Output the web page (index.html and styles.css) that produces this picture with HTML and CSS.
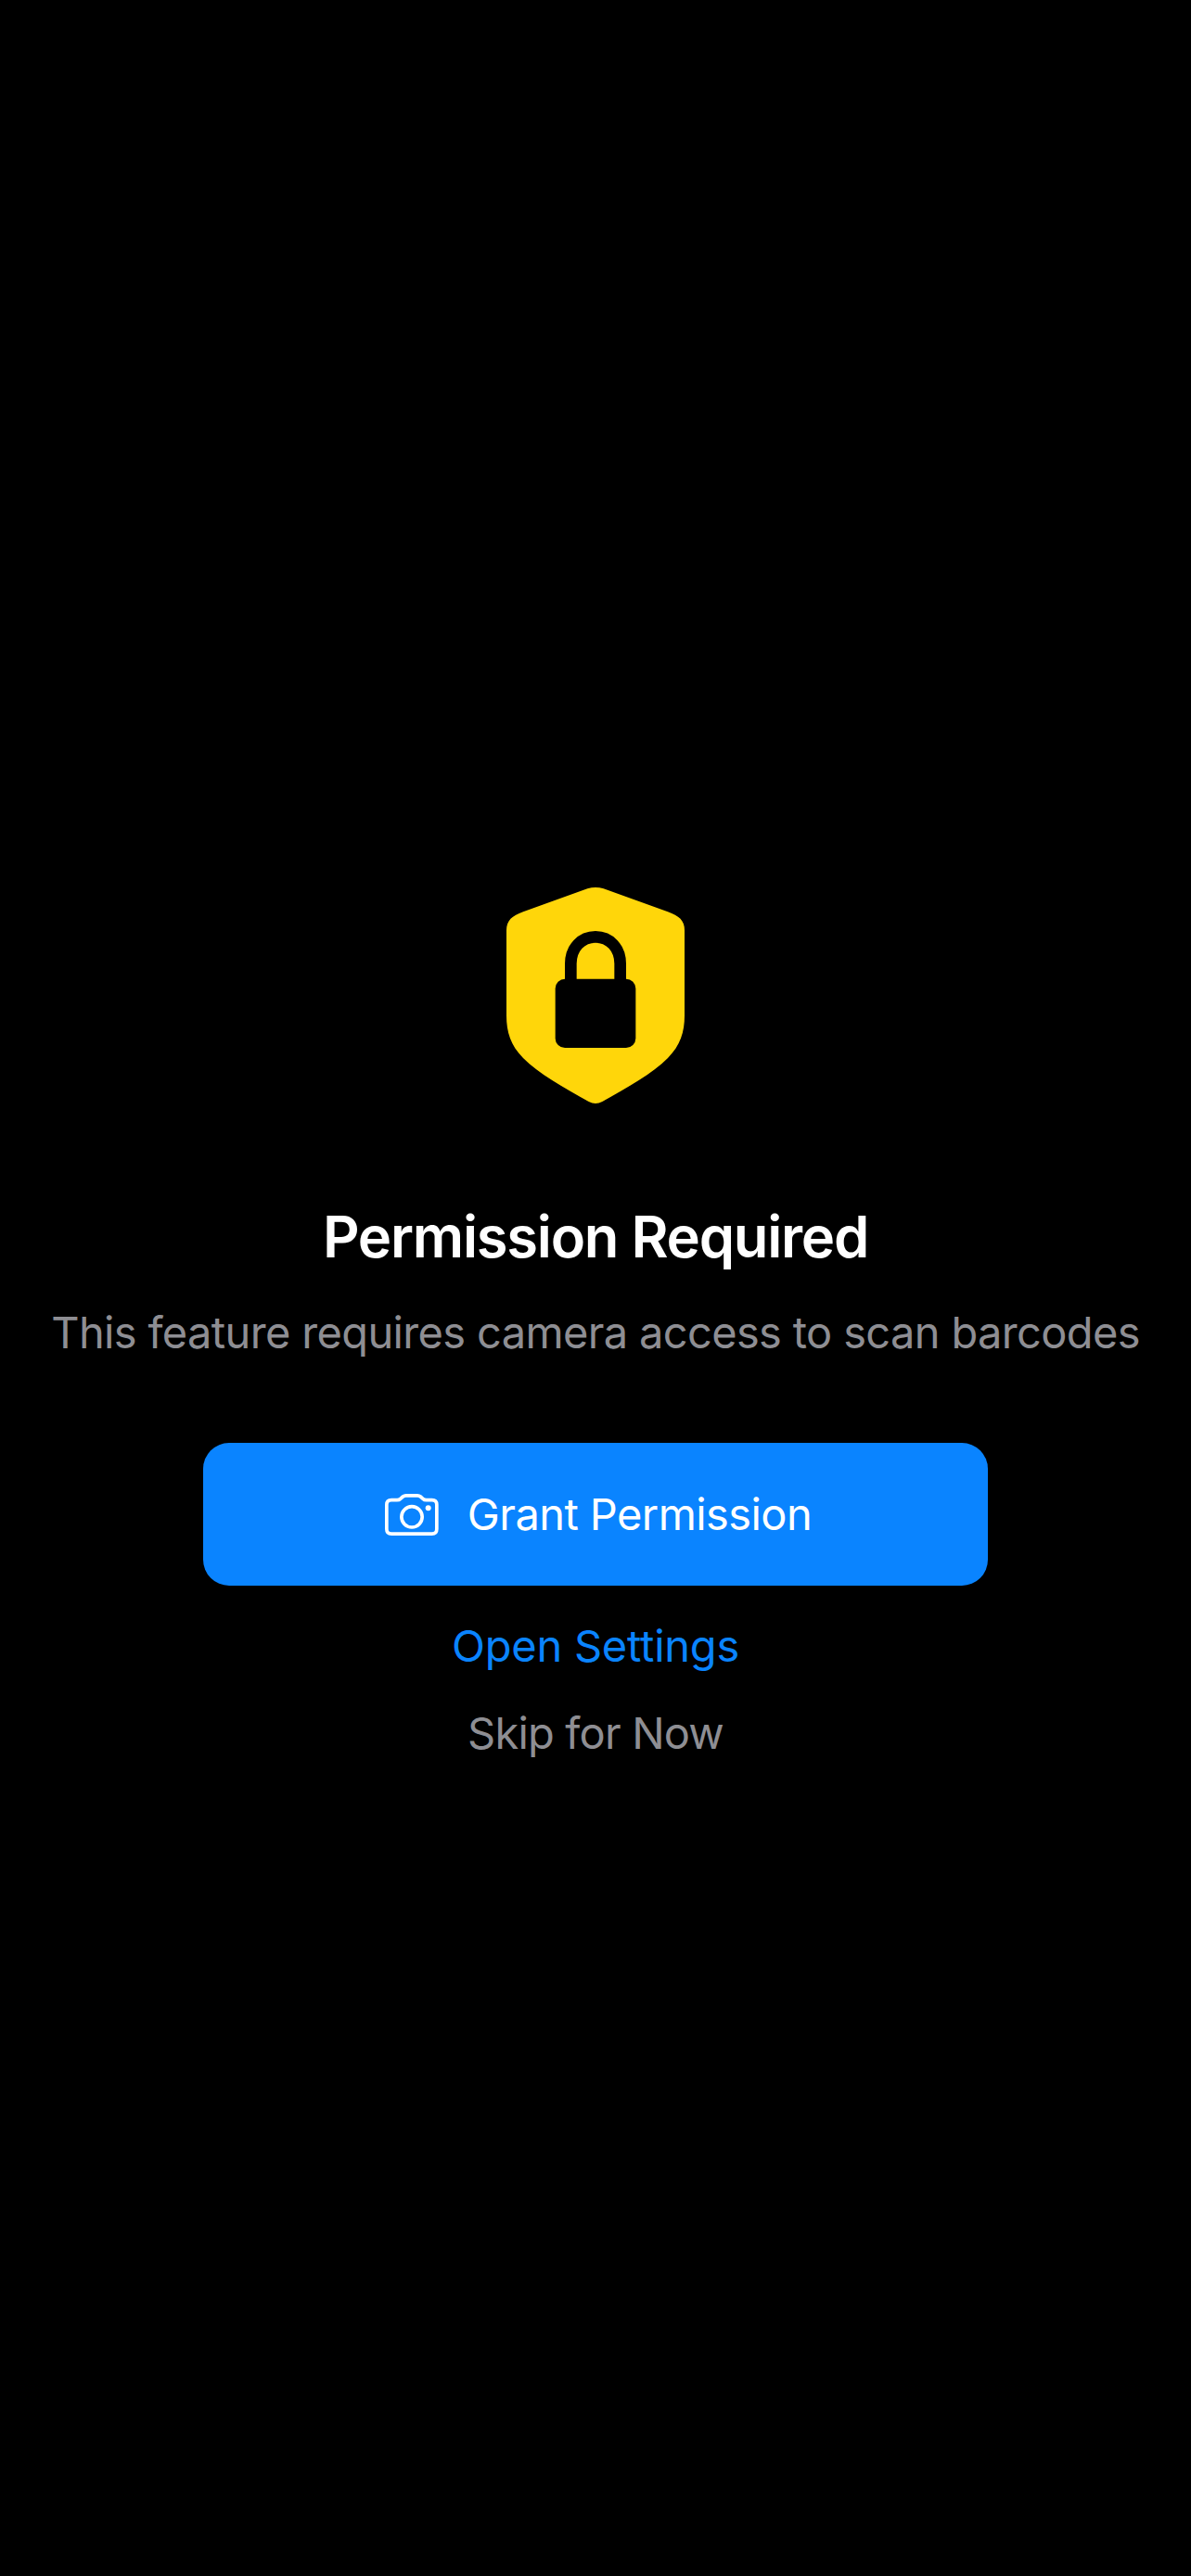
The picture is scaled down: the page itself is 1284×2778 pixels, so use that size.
FILE: index.html
```html
<!DOCTYPE html>
<html lang="en">
<head>
<meta charset="utf-8">
<title>Permission Required</title>
<link rel="stylesheet" href="styles.css">
</head>
<body>
<main class="screen">
  <svg class="shield" viewBox="78 51 576 699" aria-hidden="true">
    <path class="shield-body" d="M340 55Q366 47 392 55L600 130C636 143 654 158 654 190V466C654 520 640 563 600 603C550 653 470 698 388 744Q366 756 344 744C262 698 182 653 132 603C92 563 78 520 78 466V190C78 158 96 143 132 130Z"/>
    <path class="lock-shackle" d="M286 360V298C286 247 320 211 366 211S446 247 446 298V360"/>
    <rect x="236" y="347" width="260" height="223" rx="31"/>
  </svg>
  <h1 class="title">Permission Required</h1>
  <p class="message">This feature requires camera access to scan barcodes</p>
  <button class="grant" type="button">
    <svg class="camera" viewBox="45 60 173 135" aria-hidden="true">
      <path d="M66 80H84Q91 80 95 76L103 69Q107 65.500 113 65.500H150Q156 65.500 160 69L168 76Q172 80 179 80H197Q212.500 80 212.500 95.500V174Q212.500 189.500 197 189.500H66Q50.500 189.500 50.500 174V95.500Q50.500 80 66 80Z"/>
      <circle cx="132" cy="134.500" r="33.500"/>
      <circle class="flash" cx="185" cy="106" r="9"/>
    </svg>
    <span>Grant Permission</span>
  </button>
  <button class="link settings" type="button">Open Settings</button>
  <button class="link skip" type="button">Skip for Now</button>
</main>
</body>
</html>
```
FILE: styles.css
```css
* { box-sizing: border-box; }
body { margin: 0; background: #000; font-family: Inter, "Liberation Sans", sans-serif; }
.screen { display: flex; flex-direction: column; align-items: center; min-height: 2778px; padding-top: 957px; }
.shield { display: block; width: 192px; height: 233px; }
.shield-body { fill: #ffd60a; }
.lock-shackle { fill: none; stroke: #000; stroke-width: 38; }
.title { margin: 107px 0 0; color: #fff; font-size: 61.5px; font-weight: 600; line-height: 74px; letter-spacing: -1.25px; white-space: nowrap; }
.message { margin: 37px 0 0; color: #8e8e93; font-size: 47px; line-height: 58px; letter-spacing: -0.65px; white-space: nowrap; }
button { padding: 0; border: 0; background: none; font: inherit; font-size: 47px; line-height: 58px; white-space: nowrap; }
.grant { display: flex; align-items: center; justify-content: center; gap: 31.3px; width: 846px; height: 154px; margin-top: 90px; padding-left: 6px; border-radius: 28px; background: #0a84ff; color: #fff; letter-spacing: -0.58px; }
.camera { width: 57.7px; height: 45px; fill: none; stroke: #fff; stroke-width: 11; }
.camera .flash { fill: #fff; stroke: none; }
.settings { margin-top: 36px; color: #0a84ff; letter-spacing: -0.23px; }
.skip { margin-top: 36px; color: #8e8e93; letter-spacing: -0.82px; }
```
